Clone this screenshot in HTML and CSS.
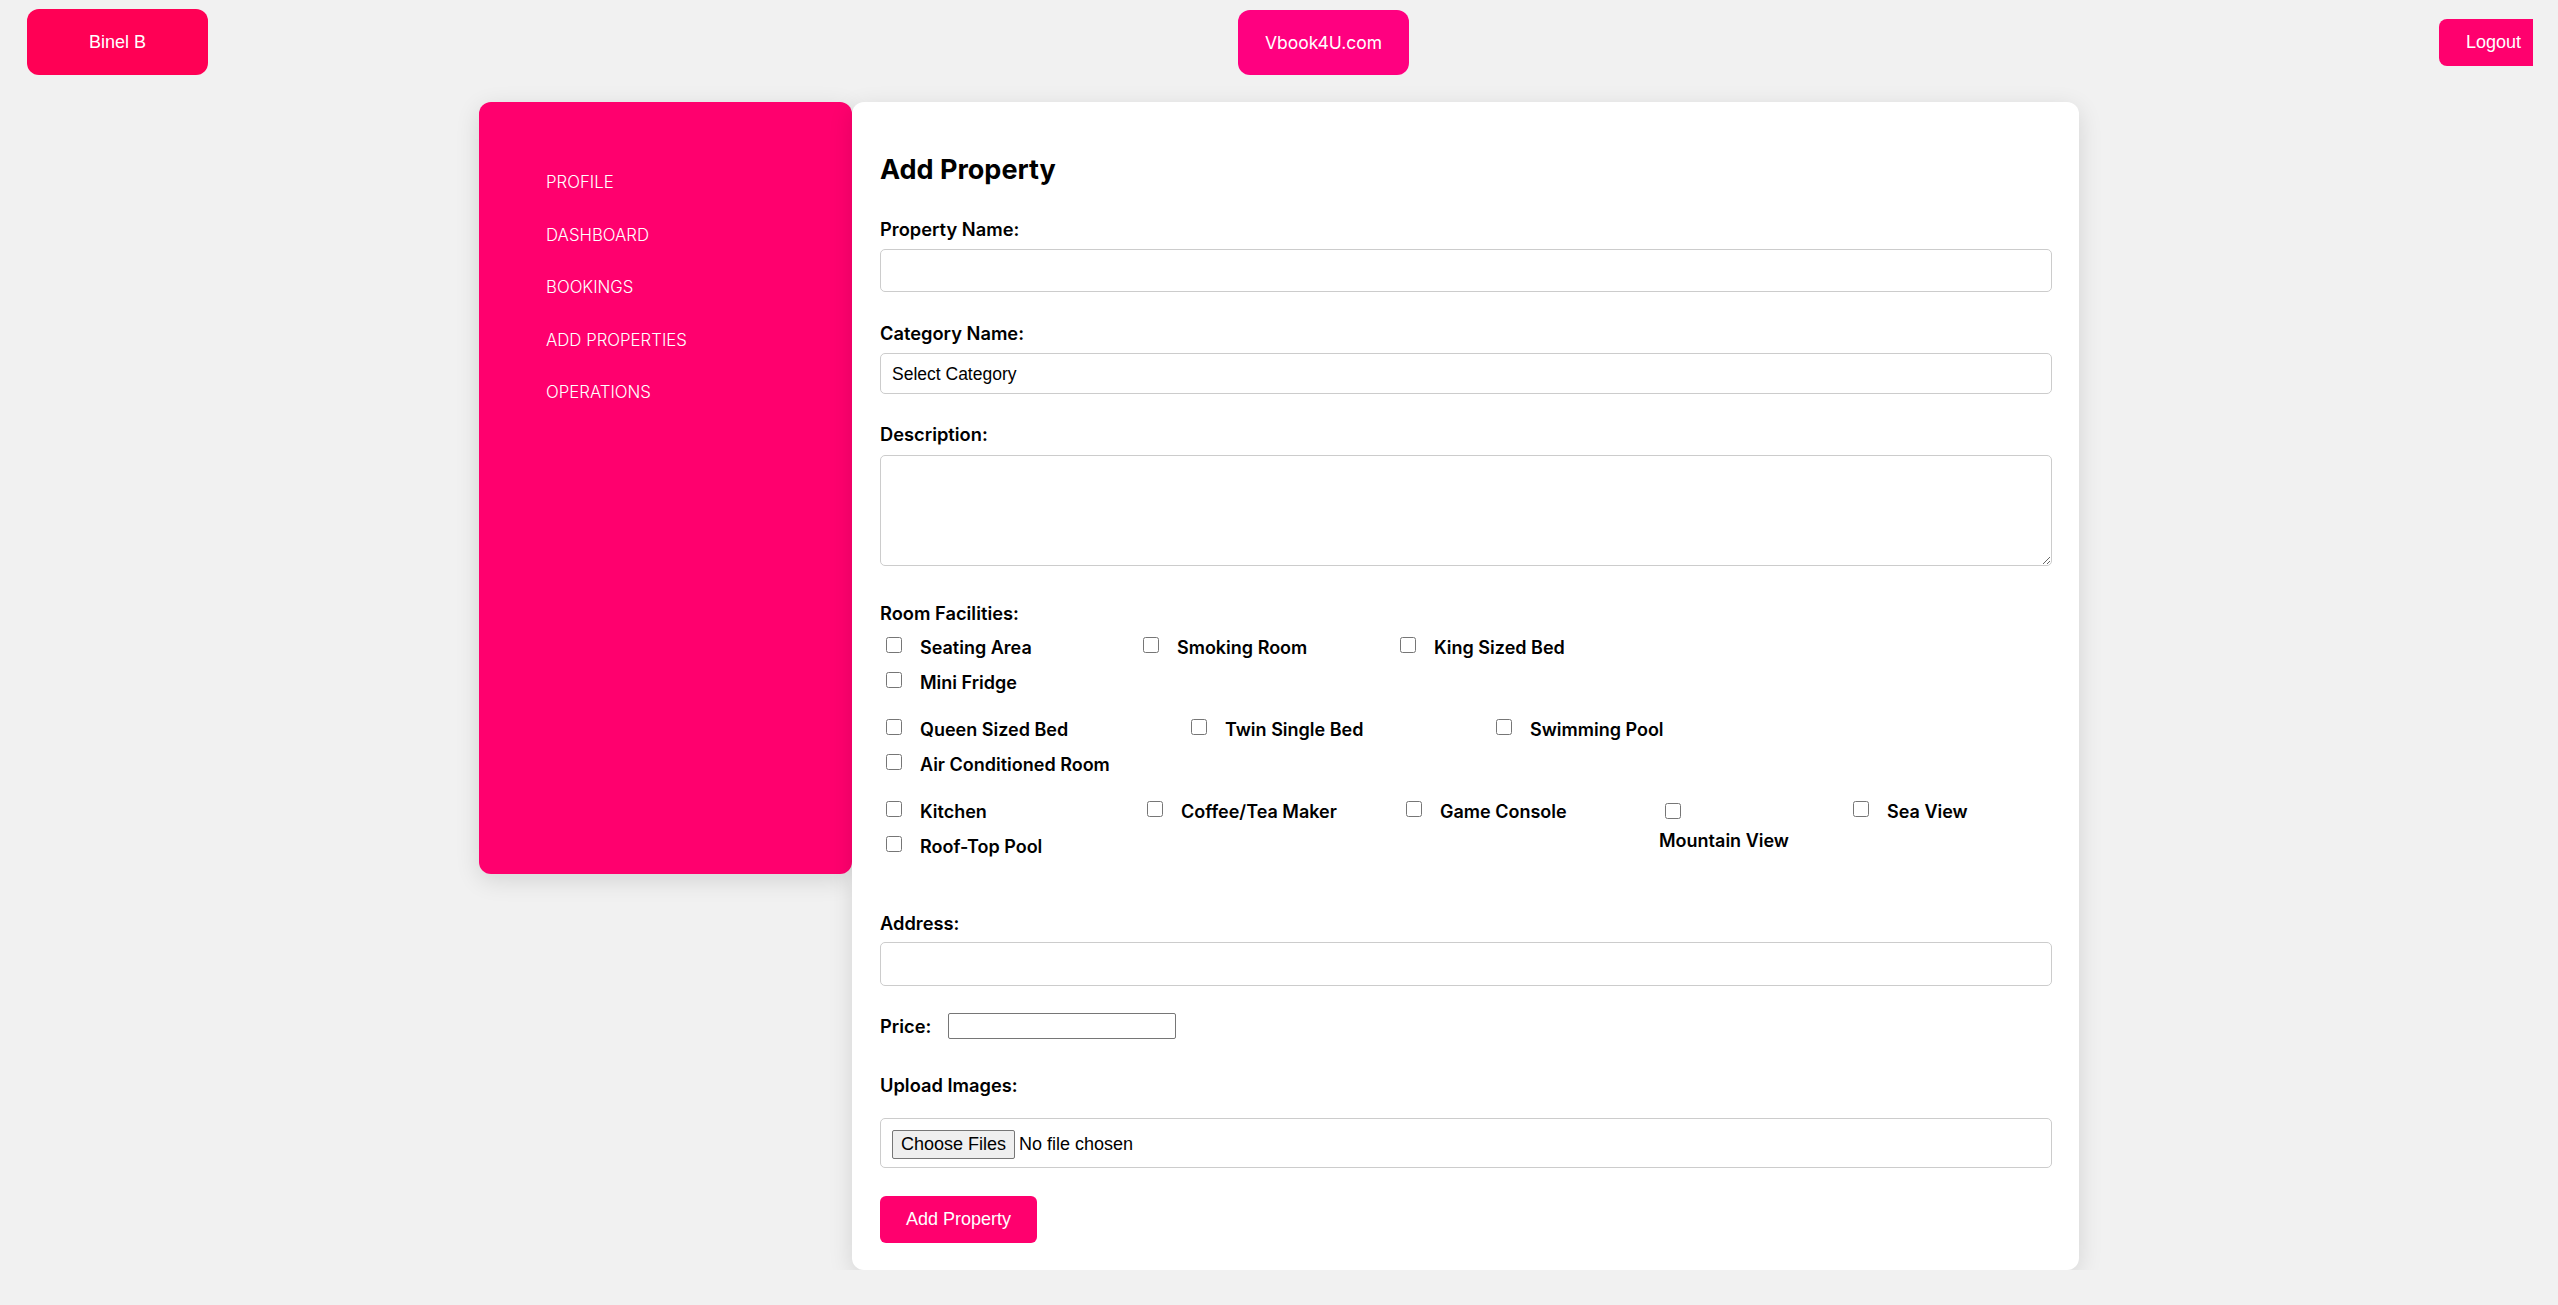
FILE: index.html
```html
<!DOCTYPE html>
<html lang="en">
<head>
<meta charset="utf-8">
<title>Add Property - Vbook4U</title>
<link rel="stylesheet" href="styles.css">
</head>
<body>
<header class="topbar">
  <div class="user-btn">Binel B</div>
  <div class="brand">Vbook4U.com</div>
  <button class="logout" type="button">Logout</button>
</header>

<div class="layout">
  <aside class="sidebar">
    <nav class="nav">
      <a class="nav-item">PROFILE</a>
      <a class="nav-item">DASHBOARD</a>
      <a class="nav-item">BOOKINGS</a>
      <a class="nav-item">ADD PROPERTIES</a>
      <a class="nav-item">OPERATIONS</a>
    </nav>
  </aside>

  <main class="card">
    <h2 class="title">Add Property</h2>
    <form class="form">
      <label class="field-label">Property Name:</label>
      <input class="text-input gap-30" type="text">

      <label class="field-label">Category Name:</label>
      <select class="select-input">
        <option>Select Category</option>
      </select>

      <label class="field-label lbl-desc">Description:</label>
      <textarea class="textarea"></textarea>

      <label class="field-label lbl-fac">Room Facilities:</label>
      <div class="fac-group g1">
        <label class="fac"><input type="checkbox"><span>Seating Area</span></label>
        <label class="fac"><input type="checkbox"><span>Smoking Room</span></label>
        <label class="fac"><input type="checkbox"><span>King Sized Bed</span></label>
        <label class="fac"><input type="checkbox"><span>Mini Fridge</span></label>
      </div>
      <div class="fac-group g2">
        <label class="fac"><input type="checkbox"><span>Queen Sized Bed</span></label>
        <label class="fac"><input type="checkbox"><span>Twin Single Bed</span></label>
        <label class="fac"><input type="checkbox"><span>Swimming Pool</span></label>
        <label class="fac"><input type="checkbox"><span>Air Conditioned Room</span></label>
      </div>
      <div class="fac-group g3">
        <label class="fac"><input type="checkbox"><span>Kitchen</span></label>
        <label class="fac"><input type="checkbox"><span>Coffee/Tea Maker</span></label>
        <label class="fac"><input type="checkbox"><span>Game Console</span></label>
        <label class="fac fac-stack"><input type="checkbox"><span>Mountain View</span></label>
        <label class="fac"><input type="checkbox"><span>Sea View</span></label>
        <label class="fac"><input type="checkbox"><span>Roof-Top Pool</span></label>
      </div>

      <label class="field-label lbl-addr">Address:</label>
      <input class="text-input addr" type="text">

      <div class="price-row">
        <label class="field-label inline">Price:</label>
        <input class="price-input" type="text">
      </div>

      <label class="field-label lbl-upload">Upload Images:</label>
      <div class="file-box">
        <input class="file-input" type="file" multiple>
      </div>

      <button class="submit" type="button">Add Property</button>
    </form>
  </main>
</div>
</body>
</html>
```

FILE: styles.css
```css
html, body {
  margin: 0;
  padding: 0;
}

body {
  background: #f1f1f1;
  font-family: Inter, "Noto Sans", sans-serif;
  color: #000;
}

/* ---------- top bar ---------- */
.topbar {
  display: flex;
  justify-content: space-between;
  align-items: center;
  padding: 9px 25px 0 27px;
}

.user-btn {
  width: 181px;
  height: 66px;
  display: flex;
  align-items: center;
  justify-content: center;
  background: #ff0055;
  color: #fff;
  border-radius: 12px;
  font-family: "Liberation Sans", Arial, sans-serif;
  font-size: 18px;
}

.brand {
  width: 171px;
  height: 65px;
  display: flex;
  align-items: center;
  justify-content: center;
  background: #ff0080;
  color: #fff;
  border-radius: 12px;
  font-family: Inter, sans-serif;
  font-size: 17.5px;
  font-weight: 400;
}

.logout {
  width: 94px;
  height: 47px;
  padding: 0 0 0 27px;
  text-align: left;
  border: none;
  background: #ff006e;
  color: #fff;
  border-radius: 8px 0 0 8px;
  font-family: "Liberation Sans", Arial, sans-serif;
  font-size: 18px;
}

/* ---------- layout ---------- */
.layout {
  width: 1600px;
  margin: 27px auto 0;
  display: flex;
  align-items: flex-start;
}

.sidebar {
  width: 373px;
  height: 772px;
  flex: none;
  background: #ff006e;
  border-radius: 12px;
  box-shadow: 0 6px 24px rgba(0, 0, 0, 0.12);
}

.nav {
  display: flex;
  flex-direction: column;
  padding: 68px 0 0 67px;
  gap: 28.5px;
}

.nav-item {
  display: block;
  color: #fff;
  font-family: Inter, sans-serif;
  font-weight: 300;
  font-size: 16.8px;
  line-height: 24px;
  text-decoration: none;
}

.card {
  flex: 1;
  background: #fff;
  border-radius: 12px;
  padding: 27px 27px 27px 28px;
  box-shadow: 0 6px 24px rgba(0, 0, 0, 0.12);
}

.title {
  margin: 25px 0 32px;
  font-size: 27px;
  line-height: 32px;
  font-weight: 700;
}

.form {
  display: block;
}

.field-label {
  display: block;
  font-size: 18.3px;
  line-height: 22px;
  font-weight: 600;
  margin: 0 0 9px;
}

.field-label.inline {
  margin: 0;
}

.lbl-desc { margin-bottom: 10px; }
.lbl-fac { margin-bottom: 6px; }
.lbl-addr { margin-bottom: 8px; }
.lbl-upload { margin-bottom: 22px; }

.text-input {
  display: block;
  box-sizing: border-box;
  width: 100%;
  height: 43px;
  border: 1px solid #ccc;
  border-radius: 5px;
  padding: 0 11px;
  font-size: 17px;
  margin: 0;
}

.gap-30 { margin-bottom: 30px; }

.text-input.addr {
  height: 44px;
  margin-bottom: 27px;
}

.select-input {
  display: block;
  box-sizing: border-box;
  width: 100%;
  height: 41px;
  border: 1px solid #ccc;
  border-radius: 5px;
  padding: 0 11px;
  margin: 0 0 29px;
  background: #fff;
  color: #000;
  -webkit-appearance: none;
  appearance: none;
  font-family: "Liberation Sans", Arial, sans-serif;
  font-size: 17.5px;
}

.textarea {
  display: block;
  box-sizing: border-box;
  width: 100%;
  height: 111px;
  border: 1px solid #ccc;
  border-radius: 5px;
  margin: 0 0 36px;
  padding: 8px;
}

/* ---------- facilities ---------- */
.fac-group {
  display: grid;
  grid-auto-rows: 35px;
  align-items: center;
}

.g1 {
  grid-template-columns: 257px 257px 1fr;
  margin-bottom: 12px;
}

.g2 {
  grid-template-columns: 305px 305px 1fr;
  margin-bottom: 12px;
}

.g3 {
  grid-template-columns: 261px 259px 259px 188px 1fr;
  margin-bottom: 48px;
}

.fac {
  display: flex;
  align-items: center;
  font-size: 18px;
  font-weight: 600;
  line-height: 22px;
  white-space: nowrap;
}

.fac input {
  width: 16px;
  height: 16px;
  margin: 0 18px 5px 6px;
  flex: none;
}

.fac-stack {
  grid-row: span 2;
  align-self: start;
  flex-direction: column;
  align-items: flex-start;
  padding-top: 9px;
}

.fac-stack input {
  margin: 0 0 11px 6px;
}

/* ---------- price ---------- */
.price-row {
  display: flex;
  align-items: center;
  gap: 17px;
  height: 26px;
  margin-bottom: 35px;
}

.price-input {
  box-sizing: border-box;
  width: 228px;
  height: 26px;
  border: 1px solid #767676;
  border-radius: 2px;
  margin: 0;
}

/* ---------- upload ---------- */
.file-box {
  box-sizing: border-box;
  height: 50px;
  border: 1px solid #ccc;
  border-radius: 5px;
  padding: 11px;
  margin-bottom: 28px;
  display: flex;
  align-items: flex-start;
}

.file-input {
  font-family: "Liberation Sans", Arial, sans-serif;
  font-size: 18px;
  color: #000;
}

.file-input::file-selector-button {
  font-family: "Liberation Sans", Arial, sans-serif;
  font-size: 18px;
  padding: 3px 8px;
  margin-right: 4px;
  border: 1px solid #767676;
  border-radius: 2px;
  background: #efefef;
  color: #000;
}

.submit {
  display: block;
  width: 157px;
  height: 47px;
  border: none;
  border-radius: 6px;
  background: #ff006e;
  color: #fff;
  font-family: "Liberation Sans", Arial, sans-serif;
  font-size: 18px;
  padding: 0;
}
```
